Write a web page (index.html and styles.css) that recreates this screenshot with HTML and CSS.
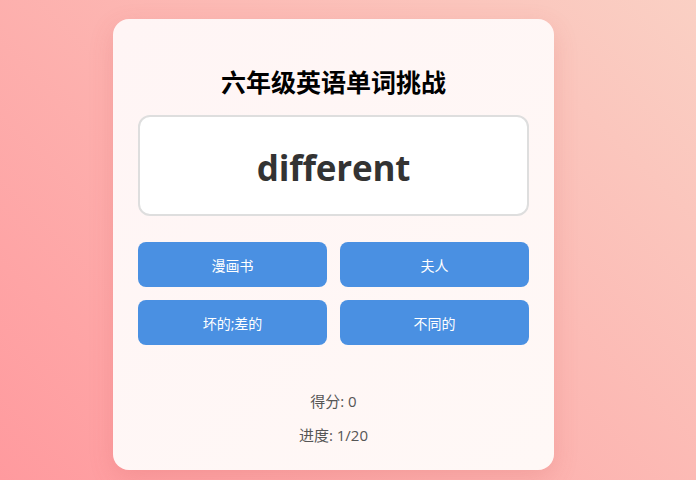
FILE: index.html
```html
<!DOCTYPE html>
<html lang="zh">
<head>
<meta charset="utf-8">
<link rel="stylesheet" href="styles.css">
</head>
<body>
<div class="card">
  <h1 class="title">六年级英语单词挑战</h1>
  <div class="word-box"><span class="word">different</span></div>
  <div class="options">
    <button class="opt">漫画书</button>
    <button class="opt">夫人</button>
    <button class="opt">坏的;差的</button>
    <button class="opt">不同的</button>
  </div>
  <div class="stats">
    <div class="stat">得分: 0</div>
    <div class="stat">进度: 1/20</div>
  </div>
</div>
</body>
</html>
```
FILE: styles.css
```css
html, body {
  margin: 0;
  padding: 0;
  height: 100%;
}
body {
  width: 696px;
  height: 480px;
  overflow: hidden;
  background: linear-gradient(45deg, #ff9a9e 0%, #fad0c4 100%);
  font-family: "Open Sans", "Noto Sans CJK SC", sans-serif;
  padding-top: 19px;
  box-sizing: border-box;
}
.card {
  margin-left: 113px;
  width: 441px;
  height: 451px;
  box-sizing: border-box;
  padding: 0 25px;
  border-radius: 16px;
  background: linear-gradient(135deg, #fff5f5 0%, #fff8f6 100%);
  box-shadow: 0 8px 24px rgba(200, 80, 80, 0.18);
  display: flex;
  flex-direction: column;
}
.title {
  margin: 49px 0 0;
  height: 28px;
  line-height: 28px;
  font-size: 25px;
  font-weight: 700;
  text-align: center;
  color: #000;
}
.word-box {
  margin-top: 19px;
  height: 101px;
  box-sizing: border-box;
  border: 2px solid #dedede;
  border-radius: 12px;
  background: #fff;
  display: flex;
  align-items: center;
  justify-content: center;
}
.word {
  font-size: 35px;
  font-weight: 700;
  color: #333;
  letter-spacing: -0.2px;
  padding-top: 3px;
}
.options {
  margin-top: 26px;
  display: grid;
  grid-template-columns: 1fr 1fr;
  column-gap: 13px;
  row-gap: 13px;
}
.opt {
  height: 45px;
  border: none;
  border-radius: 8px;
  background: #4a90e2;
  color: #fff;
  font-family: "Open Sans", "Noto Sans CJK SC", sans-serif;
  font-size: 14px;
  padding: 0;
}
.stats {
  margin-top: 46px;
  display: flex;
  flex-direction: column;
  align-items: center;
  gap: 13px;
}
.stat {
  font-size: 15px;
  line-height: 21px;
  color: #555;
}
```
